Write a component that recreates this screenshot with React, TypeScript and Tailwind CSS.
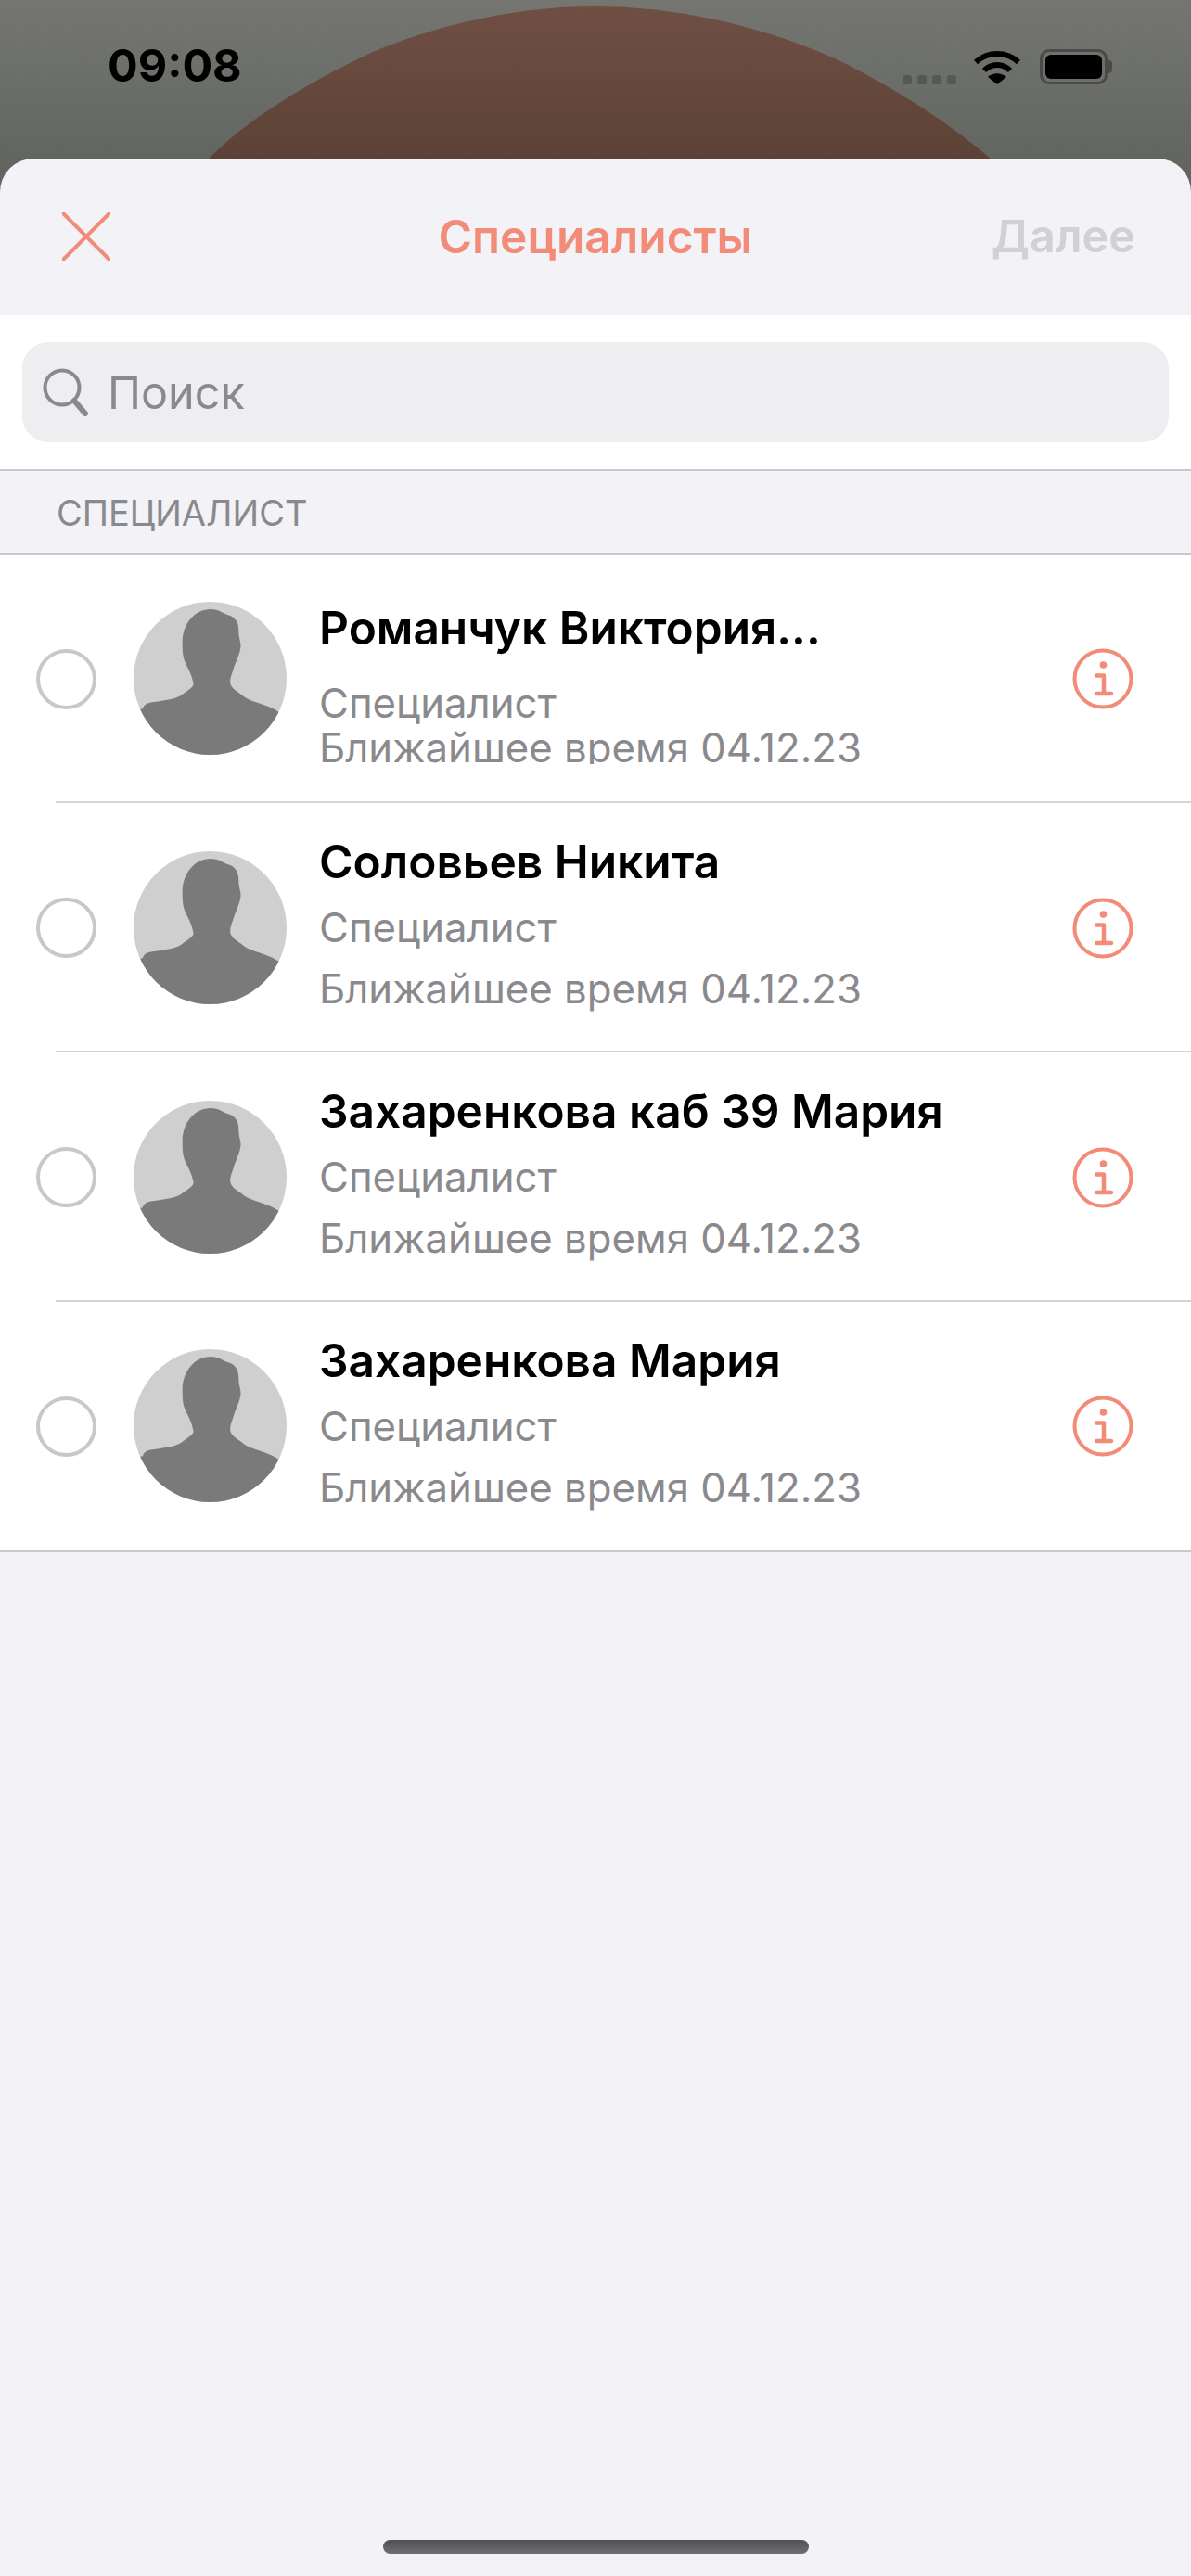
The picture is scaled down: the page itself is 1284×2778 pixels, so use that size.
import React from "react";

const people = [
  { name: "Романчук Виктория...", clipped: true },
  { name: "Соловьев Никита" },
  { name: "Захаренкова каб 39 Мария" },
  { name: "Захаренкова Мария" },
];

function Avatar() {
  return (
    <svg viewBox="0 0 166 166" className="w-[165px] h-[165px] shrink-0">
      <defs>
        <clipPath id="avatar-clip">
          <circle cx="83" cy="83" r="83" />
        </clipPath>
      </defs>
      <circle cx="83" cy="83" r="83" fill="#cfcfcf" />
      <path
        clipPath="url(#avatar-clip)"
        fill="#7a7a7a"
        d="M10 116 C11 112 14 110 20 109 C32 107 45 106 52 101 C57 97 65 93 65 89 C63 79 60 74 57 68 C53 60 53 52 53 44 C53 24 66 8 84 8 C92 8 96 12 102 14 C112 17 114 24 114 32 C114 40 117 44 116 50 C115 58 110 66 108 74 C106 80 104 85 105 89 C107 95 114 98 120 103 C128 109 145 111 155 118 L166 125 L166 166 L0 166 L0 118 Z"
      />
    </svg>
  );
}

function InfoIcon() {
  return (
    <svg viewBox="0 0 66 66" className="w-[66px] h-[66px] shrink-0" fill="none" stroke="#f28b77">
      <circle cx="33" cy="33" r="30.5" strokeWidth="4" />
      <circle cx="33.5" cy="18" r="3.8" fill="#f28b77" stroke="none" />
      <path d="M26 29.5 H34 V49 M26 49 H42" strokeWidth="4.5" strokeLinecap="round" strokeLinejoin="round" />
    </svg>
  );
}

function Row({ name, clipped, last }: { name: string; clipped?: boolean; last?: boolean }) {
  return (
    <div className="relative h-[269px] first:h-[268px] last:h-[268px] flex items-center">
      <div className="ml-[39px] w-[65px] h-[65px] rounded-full border-[4px] border-[#c8c8c8] shrink-0" />
      <div className="ml-[40px] mb-[1px]">
        <Avatar />
      </div>
      <div className="ml-[35px] flex-1 h-full overflow-hidden">
        {clipped ? (
          <div className="h-[226px] overflow-hidden pt-[49px]">
            <div className="text-[49.6px] leading-[60px] font-semibold text-black">{name}</div>
            <div className="mt-[28px] text-[43.7px] leading-[48px] text-[#8a8a8e]">Специалист</div>
            <div className="text-[43.7px] leading-[48px] text-[#8a8a8e]">Ближайшее время 04.12.23</div>
          </div>
        ) : (
          <div className="pt-[33px]">
            <div className="text-[49.6px] leading-[60px] font-semibold text-black">{name}</div>
            <div className="mt-[14px] text-[43.7px] leading-[56px] text-[#8a8a8e]">Специалист</div>
            <div className="mt-[10px] text-[43.7px] leading-[56px] text-[#8a8a8e]">Ближайшее время 04.12.23</div>
          </div>
        )}
      </div>
      <div className="mr-[62px]">
        <InfoIcon />
      </div>
      {!last && <div className="absolute left-[60px] right-0 bottom-0 h-[2px] bg-[#d4d4d8]" />}
    </div>
  );
}

export default function App() {
  return (
    <div className="relative w-[1284px] h-[2778px] overflow-hidden bg-[#636660] font-['Inter','Liberation_Sans',sans-serif]">
      {/* dimmed screen behind the sheet */}
      <svg viewBox="0 0 1284 171" className="absolute left-0 top-0 w-[1284px] h-[171px]">
        <defs>
          <linearGradient id="back-fill" x1="0" y1="0" x2="0" y2="1">
            <stop offset="0" stopColor="#757672" />
            <stop offset="1" stopColor="#636660" />
          </linearGradient>
          <linearGradient id="dome-fill" x1="0" y1="0" x2="0" y2="1">
            <stop offset="0" stopColor="#704f43" />
            <stop offset="1" stopColor="#5c4236" />
          </linearGradient>
        </defs>
        <rect width="1284" height="171" fill="url(#back-fill)" />
        <path
          fill="url(#dome-fill)"
          d="M225 171 C270 125 340 85 400 57 C450 35 540 7 640 7 C740 7 830 32 900 63 C960 92 1020 130 1068 171 Z"
        />
      </svg>

      <div className="relative h-[171px] flex">
        <div className="ml-[116px] mt-[41px] text-[48.5px] leading-[60px] font-bold text-black">09:08</div>
        <div className="ml-auto mr-[90px] mt-[53px] flex items-start">
          <div className="flex gap-[6px] mt-[28px] mr-[19px]">
            <div className="w-[10px] h-[10px] rounded-[3px] bg-[#565855]" />
            <div className="w-[10px] h-[10px] rounded-[3px] bg-[#565855]" />
            <div className="w-[10px] h-[10px] rounded-[3px] bg-[#565855]" />
            <div className="w-[10px] h-[10px] rounded-[3px] bg-[#565855]" />
          </div>
          <svg viewBox="0 0 50 38" className="w-[50px] h-[38px] mr-[21px]" fill="none" stroke="#000" strokeWidth="6">
            <path d="M2 14 C15 2 35 2 48 14" />
            <path d="M11 23 C19 15 31 15 39 23" />
            <path d="M25 38 L15 30 C21 25 29 25 35 30 Z" fill="#000" stroke="none" />
          </svg>
          <div className="relative w-[73px] h-[38px] rounded-[10px] border-[3px] border-[#4a4b49] p-[3px]">
            <div className="w-full h-full rounded-[6px] bg-black" />
            <div className="absolute right-[-8px] top-[9px] w-[4px] h-[14px] rounded-r-full bg-[#4a4b49]" />
          </div>
        </div>
      </div>

      <div className="relative h-[2607px] rounded-t-[36px] overflow-hidden bg-[#f2f2f7] flex flex-col">
        <div className="h-[169px] grid grid-cols-3 items-center pl-[67px] pr-[60px] pb-[2px] shrink-0">
          <svg viewBox="0 0 52 52" className="w-[52px] h-[52px]" fill="none" stroke="#f28b77" strokeWidth="4" strokeLinecap="round">
            <path d="M1.5 1.5 L50.5 50.5 M50.5 1.5 L1.5 50.5" />
          </svg>
          <div className="pr-[7px] text-[49.6px] leading-[58px] font-semibold text-[#f28b77] text-center whitespace-nowrap">Специалисты</div>
          <div className="text-[48.5px] leading-[58px] font-semibold text-[#d1d1d3] text-right">Далее</div>
        </div>

        <div className="h-[166px] bg-white px-[24px] pt-[29px] shrink-0">
          <div className="h-[108px] rounded-[28px] bg-[#eeeef0] flex items-center pl-[22px]">
            <svg viewBox="0 0 50 52" className="w-[50px] h-[52px]" fill="none" stroke="#8a8a8e">
              <circle cx="21" cy="21" r="18.5" strokeWidth="4" />
              <path d="M34 35 L46 49" strokeWidth="6" strokeLinecap="round" />
            </svg>
            <div className="ml-[20px] mt-[2px] text-[48.5px] leading-[60px] text-[#8a8a8e]">Поиск</div>
          </div>
        </div>

        <div className="h-[92px] border-y-2 border-[#c8c8cc] flex items-center pl-[61px] pt-[2px] shrink-0 text-[38px] leading-[46px] text-[#8a8a8e]">
          СПЕЦИАЛИСТ
        </div>

        <div className="bg-white border-b-2 border-[#c8c8cc] shrink-0">
          {people.map((p, i) => (
            <Row key={p.name} name={p.name} clipped={p.clipped} last={i === people.length - 1} />
          ))}
        </div>

        <div className="absolute left-[413px] bottom-[24px] w-[459px] h-[15px] rounded-full bg-gradient-to-b from-[#505052] to-[#707072]" />
      </div>
    </div>
  );
}
